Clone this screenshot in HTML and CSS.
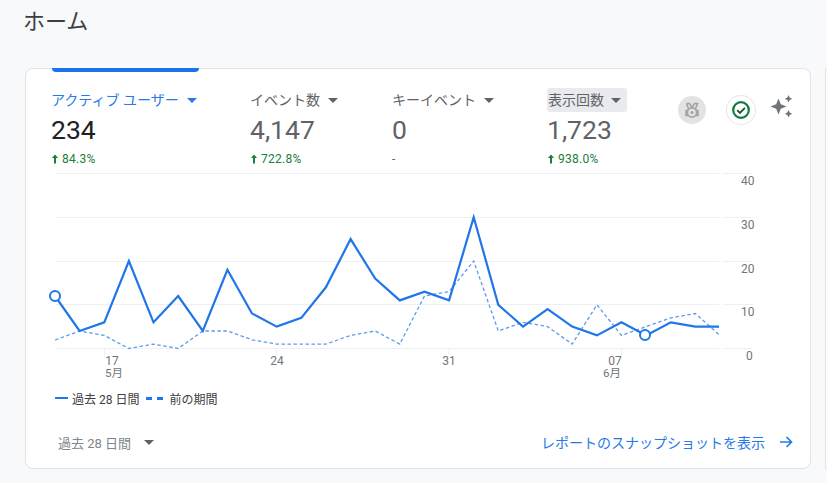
FILE: index.html
```html
<!DOCTYPE html>
<html lang="ja">
<head>
<meta charset="utf-8">
<title>ホーム</title>
<link rel="stylesheet" href="styles.css">
</head>
<body>
<h1 class="title">ホーム</h1>
<div class="cards">
  <section class="card">
    <div class="tab-bar"></div>
    <div class="metrics">
      <div class="metric metric-active">
        <div class="metric-label">アクティブ ユーザー<span class="caret"></span></div>
        <div class="metric-value">234</div>
        <div class="metric-delta"><svg class="up" viewBox="0 0 8 10"><path d="M4 0.500 7 4H5V9.500H3V4H1Z"/></svg>84.3%</div>
      </div>
      <div class="metric metric-events">
        <div class="metric-label">イベント数<span class="caret"></span></div>
        <div class="metric-value">4,147</div>
        <div class="metric-delta"><svg class="up" viewBox="0 0 8 10"><path d="M4 0.500 7 4H5V9.500H3V4H1Z"/></svg>722.8%</div>
      </div>
      <div class="metric metric-key">
        <div class="metric-label">キーイベント<span class="caret"></span></div>
        <div class="metric-value">0</div>
        <div class="metric-delta metric-none">-</div>
      </div>
      <div class="metric metric-views">
        <div class="metric-label metric-hover">表示回数<span class="caret"></span></div>
        <div class="metric-value">1,723</div>
        <div class="metric-delta"><svg class="up" viewBox="0 0 8 10"><path d="M4 0.500 7 4H5V9.500H3V4H1Z"/></svg>938.0%</div>
      </div>
      <div class="badges">
        <span class="badge badge-medal">
          <svg viewBox="0 0 28 28" width="28" height="28" fill="none" stroke="#a3a3a3" stroke-width="1.600">
            <path d="M8.500 7.500h3l2.500 4 2.500-4h3l-2.200 5.500M8.500 7.500l2.200 5.500"/>
            <circle cx="14" cy="16.500" r="4.600"/>
            <circle cx="14" cy="16.500" r="1.500" fill="#a3a3a3" stroke="none"/>
            <path d="M9.500 13.500 8 15v4.500h2.500M18.500 13.500 20 15v4.500h-2.500"/>
          </svg>
        </span>
        <span class="badge badge-check">
          <svg viewBox="0 0 28 28" width="28" height="28" fill="none">
            <circle cx="14" cy="14" r="7.800" stroke="#0f7b3e" stroke-width="2.200"/>
            <path d="M10.200 14.200l2.700 2.700 5-5.100" stroke="#14532d" stroke-width="1.800"/>
          </svg>
        </span>
        <svg class="sparkle" viewBox="0 0 26 26" width="26" height="26" fill="#70757a">
          <path d="M9.500 4.500 11.800 10.200 17.500 12.500 11.800 14.800 9.500 20.500 7.200 14.800 1.500 12.500 7.200 10.200Z"/>
          <path d="M19.500 1 20.700 3.500 23.200 4.700 20.700 5.900 19.500 8.400 18.300 5.900 15.800 4.700 18.300 3.500Z"/>
          <path d="M19.500 16 20.700 18.500 23.200 19.700 20.700 20.900 19.500 23.400 18.300 20.900 15.800 19.700 18.300 18.500Z"/>
        </svg>
      </div>
    </div>
    <svg class="chart" viewBox="26 170 783 212" width="783" height="212">
      <g class="grid">
        <path d="M55 173.500H719M723 173.500H753"/>
        <path d="M55 217.500H719M723 217.500H753"/>
        <path d="M55 261.500H719M723 261.500H753"/>
        <path d="M55 304.500H719M723 304.500H753"/>
        <path d="M55 348.500H719M723 348.500H753"/>
        <path d="M104.500 349V356M276.500 349V356M449 349V356M621.500 349V356"/>
      </g>
      <polyline class="line-prev" points="55,340 79.600,331 104.300,335.400 128.900,348.500 153.500,344.100 178.200,348.500 202.800,331 227.400,331 252,339.800 276.700,344.100 301.300,344.100 325.900,344.100 350.600,335.400 375.200,331 399.800,344.100 424.500,296 449.100,291.600 473.700,261 498.300,331 523,322.300 547.600,326.600 572.200,344.100 596.900,304.800 621.500,335.400 646.100,326.600 670.800,317.900 695.400,313.500 720,335.400"/>
      <polyline class="line-cur" points="55,296 79.600,331 104.300,322.300 128.900,261 153.500,322.300 178.200,296 202.800,331 227.400,269.800 252,313.500 276.700,326.600 301.300,317.900 325.900,287.300 350.600,239.100 375.200,278.500 399.800,300.400 424.500,291.600 449.100,300.400 473.700,217.300 498.300,304.800 523,326.600 547.600,309.100 572.200,326.600 596.900,335.400 621.500,322.300 646.100,335.400 670.800,322.300 695.400,326.600 719,326.600"/>
      <circle class="dot" cx="55" cy="296" r="5"/>
      <circle class="dot" cx="645" cy="335" r="5"/>
      <g class="axis">
        <text x="741" y="185">40</text>
        <text x="741" y="229">30</text>
        <text x="741" y="273">20</text>
        <text x="741" y="316">10</text>
        <text x="746" y="360">0</text>
        <text x="112" y="364.500" text-anchor="middle">17</text>
        <text x="114" y="377" text-anchor="middle" class="month">5月</text>
        <text x="277" y="365" text-anchor="middle">24</text>
        <text x="449" y="365" text-anchor="middle">31</text>
        <text x="615" y="364.500" text-anchor="middle">07</text>
        <text x="612" y="377" text-anchor="middle" class="month">6月</text>
      </g>
    </svg>
    <div class="legend">
      <span class="swatch"></span><span class="legend-text">過去 28 日間</span>
      <span class="swatch-dash"><i></i><i></i></span><span class="legend-text">前の期間</span>
    </div>
    <div class="footer">
      <div class="range">過去 28 日間<span class="caret caret-range"></span></div>
      <a class="report-link">レポートのスナップショットを表示
        <svg viewBox="0 0 14 14" width="14" height="14" fill="none" stroke="#2579ea" stroke-width="1.700"><path d="M1 7H12.500M7.500 2l5 5-5 5"/></svg>
      </a>
    </div>
  </section>
  <section class="card card-next"></section>
</div>
</body>
</html>
```
FILE: styles.css
```css
* { box-sizing: border-box; }
html, body { margin: 0; }
body {
  width: 827px;
  height: 483px;
  overflow: hidden;
  background: #f8f9fa;
  font-family: Roboto, "Noto Sans CJK JP", sans-serif;
  color: #202124;
}
.title {
  margin: 0;
  padding: 7px 0 0 23px;
  height: 68px;
  font-size: 22px;
  line-height: 30px;
  font-weight: 400;
  color: #3c4043;
}
.cards { display: flex; gap: 14px; overflow: hidden; }
.card {
  flex: none;
  width: 786px;
  height: 401px;
  margin-left: 25px;
  background: #fff;
  border: 1px solid #e0e2e6;
  border-radius: 8px;
  display: flex;
  flex-direction: column;
}
.card-next {
  width: 2px;
  margin-left: 0;
  border-right: 0;
  border-radius: 8px 0 0 8px;
}
.tab-bar {
  width: 147px;
  height: 4px;
  margin: -1px 0 0 26px;
  background: #1a73e8;
  border-radius: 0 0 4px 4px;
  flex: none;
}
.metrics {
  display: flex;
  height: 98px;
  padding: 16px 0 0 25px;
  flex: none;
}
.metric { flex: none; }
.metric-active { width: 199px; }
.metric-events { width: 142px; }
.metric-key { width: 155px; }
.metric-views { width: 130px; }
.metric-label {
  display: inline-flex;
  align-items: center;
  height: 24px;
  font-size: 14px;
  line-height: 24px;
  color: #5f6368;
  white-space: nowrap;
  vertical-align: top;
}
.metric-active .metric-label { color: #2579ea; }
.metric-hover {
  background: #e8eaed;
  border-radius: 3px;
  padding: 0 6px 0 1px;
}
.metric-hover .caret { margin-left: 7px; }
.caret {
  display: inline-block;
  width: 0;
  height: 0;
  margin-left: 8px;
  border-left: 5px solid transparent;
  border-right: 5px solid transparent;
  border-top: 5px solid currentColor;
}
.metric-value {
  font-size: 26.500px;
  line-height: 34px;
  color: #5f6368;
  margin-top: 1px;
}
.metric-active .metric-value { color: #202124; }
.metric-delta {
  display: flex;
  align-items: center;
  gap: 3px;
  font-size: 12px;
  line-height: 14px;
  margin-top: 5px;
  color: #188038;
  letter-spacing: 0.25px;
}
.metric-none { color: #5f6368; }
.up { width: 8px; height: 10px; fill: #188038; }
.badges {
  display: flex;
  align-items: flex-start;
  height: 28px;
  margin-top: 8px;
  margin-left: 1px;
}
.badge {
  width: 28px;
  height: 28px;
  border-radius: 50%;
  flex: none;
  display: block;
}
.badge-medal { background: #e3e3e3; margin-right: 21px; }
.badge-check {
  background: #fff;
  box-shadow: 0 0 0 1px #e6e6e6;
  margin-right: 14px;
}
.sparkle { flex: none; display: block; margin-top: -2px; }
.chart { display: block; flex: none; }
.grid path { stroke: #eeeff1; stroke-width: 1; fill: none; }
.line-cur { fill: none; stroke: #2076e8; stroke-width: 2.200; }
.line-prev { fill: none; stroke: #5c9bf0; stroke-width: 1.300; stroke-dasharray: 3.500 2.500; }
.dot { fill: #fff; stroke: #2076e8; stroke-width: 2; }
.axis text {
  font-family: Roboto, "Noto Sans CJK JP", sans-serif;
  font-size: 12px;
  fill: #70757a;
}
.axis .month { font-size: 11.500px; }
.legend {
  display: flex;
  align-items: center;
  height: 20px;
  margin-top: 6px;
  padding-left: 29px;
  font-size: 12px;
  color: #3c4043;
}
.swatch { width: 13px; height: 2px; background: #2076e8; margin-right: 4px; }
.swatch-dash { display: flex; gap: 5px; margin: 0 6px 0 7px; }
.swatch-dash i { width: 6px; height: 3px; background: #2076e8; display: block; }
.footer {
  display: flex;
  align-items: center;
  justify-content: space-between;
  height: 24px;
  margin-top: 22px;
  padding: 0 17px 0 32px;
}
.range {
  display: flex;
  align-items: center;
  font-size: 13px;
  color: #80868b;
}
.caret-range { margin-left: 13px; color: #5f6368; }
.report-link {
  display: flex;
  align-items: center;
  gap: 14px;
  font-size: 14px;
  color: #2579ea;
}
```
